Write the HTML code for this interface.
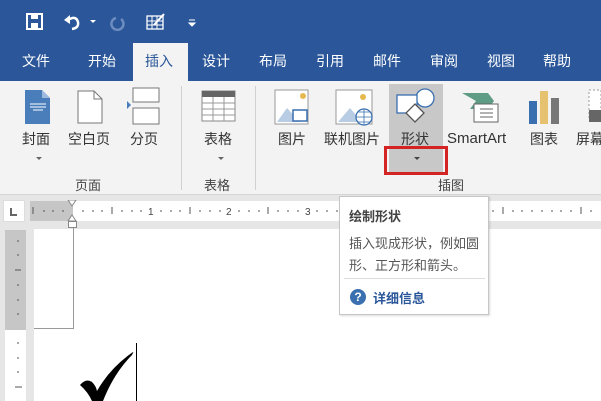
<!DOCTYPE html>
<html><head><meta charset="utf-8"><style>
*{margin:0;padding:0;box-sizing:border-box}
body{width:601px;height:401px;overflow:hidden;position:relative;background:#e6e6e6;font-family:"Liberation Sans","Noto Sans CJK SC",sans-serif;color:#333}
.a{position:absolute}
.tab{position:absolute;top:51px;color:#fff;font-size:14px}
.lbl{position:absolute;top:129px;font-size:14px;color:#333;white-space:nowrap}
.glb{position:absolute;top:175px;font-size:13px;color:#444}
.caret{position:absolute;width:0;height:0;border-left:3px solid transparent;border-right:3px solid transparent;border-top:3px solid #666}
</style></head><body>
<div class="a" style="left:0;top:0;width:601px;height:81px;background:#2b579a"></div>
<svg class="a" style="left:24px;top:11px" width="180" height="22" viewBox="0 0 180 22">
<rect x="3" y="3" width="15" height="15" fill="none" stroke="#fff" stroke-width="2"/><rect x="7" y="3" width="7" height="5" fill="#fff"/><rect x="7" y="12" width="7" height="6" fill="#fff"/>
<path d="M44 9 Q52 4 54 11 Q55 17 48 18" fill="none" stroke="#fff" stroke-width="2.5"/><path d="M40 9 L46 4 L46 13Z" fill="#fff"/>
<path d="M66 9 L72 9 L69 12Z" fill="#fff"/>
<path d="M92 7 A6 6 0 1 0 97 8" fill="none" stroke="#6d8cbf" stroke-width="2.5"/>
<rect x="123" y="5" width="16" height="13" fill="none" stroke="#fff" stroke-width="1.3"/><path d="M123 10H139M123 14H139M128 5V18M133 5V18" stroke="#fff"/><path d="M130 14L140 3" stroke="#fff" stroke-width="2"/>
<path d="M165 9H171M165 12L171 12L168 15Z" fill="#fff" stroke="#fff"/>
</svg>
<div class="a" style="left:133px;top:43px;width:55px;height:38px;background:#f3f3f3"></div>
<div class="tab" style="left:22px">文件</div>
<div class="tab" style="left:88px">开始</div>
<div class="tab" style="left:145px;color:#2b579a">插入</div>
<div class="tab" style="left:202px">设计</div>
<div class="tab" style="left:259px">布局</div>
<div class="tab" style="left:316px">引用</div>
<div class="tab" style="left:373px">邮件</div>
<div class="tab" style="left:430px">审阅</div>
<div class="tab" style="left:487px">视图</div>
<div class="tab" style="left:543px">帮助</div>
<div class="a" style="left:0;top:81px;width:601px;height:114px;background:#f3f3f3;border-bottom:1px solid #d5d5d5"></div>
<div class="a" style="left:389px;top:84px;width:54px;height:90px;background:#c8c8c8"></div>
<div class="a" style="left:384px;top:146px;width:64px;height:29px;border:3px solid #d42323"></div>
<div class="a" style="left:181px;top:86px;width:1px;height:104px;background:#d0d0d0"></div>
<div class="a" style="left:255px;top:86px;width:1px;height:104px;background:#d0d0d0"></div>
<svg class="a" style="left:0;top:84px" width="601" height="42" viewBox="0 84 601 42">
<path d="M25 90H42L50 98V124H25Z" fill="#4a7ebb"/><path d="M42 90V98H50" fill="#9dbbe0"/><path d="M30 104H46M30 107H46M33 110H43" stroke="#fff"/>
<path d="M78 91H94L102 99V123H78Z" fill="#fff" stroke="#777"/><path d="M94 91V99H102" fill="none" stroke="#777"/>
<rect x="133" y="88" width="26" height="14" fill="#fff" stroke="#777"/><rect x="133" y="108" width="26" height="16" fill="#fff" stroke="#777"/><path d="M127 101L131 105L127 109Z" fill="#4a7ebb"/>
<rect x="202" y="91" width="33" height="30" fill="#fff" stroke="#888"/><rect x="202" y="91" width="33" height="6" fill="#666"/><path d="M202 103H235M202 109H235M202 115H235M213 97V121M224 97V121" stroke="#999"/>
<rect x="275" y="90" width="33" height="34" fill="#fff" stroke="#999"/><path d="M277 122L287 108L300 122Z" fill="#b8cde4"/><circle cx="303" cy="96" r="3" fill="#e6b94f"/><rect x="293" y="110" width="14" height="11" fill="#fff" stroke="#3a6fb0" stroke-width="1.5"/>
<rect x="336" y="90" width="36" height="34" fill="#fff" stroke="#999"/><path d="M338 122L350 108L362 122Z" fill="#b8cde4"/><circle cx="363" cy="97" r="3" fill="#e6b94f"/><circle cx="364" cy="117" r="8" fill="#fff" stroke="#3a6fb0" stroke-width="1.3"/><path d="M356 117H372M364 109V125M358 112H370M358 122H370" stroke="#3a6fb0" stroke-width="0.8"/>
<circle cx="425" cy="98" r="9" fill="#fff" stroke="#3a6fb0" stroke-width="1.3"/><rect x="397" y="95" width="20" height="18" fill="#fff" stroke="#3a6fb0" stroke-width="1.3"/><path d="M415 104L424 113L415 122L406 113Z" fill="#fff" stroke="#555" stroke-width="1.3"/>
<path d="M462 93H488L494 101L488 109H470L476 101Z" fill="#5f9c85"/><rect x="474" y="104" width="24" height="18" fill="#fff" stroke="#666"/><path d="M480 109H493M480 113H493M480 117H493" stroke="#666"/>
<rect x="529" y="101" width="8" height="23" fill="#3a6fb0"/><rect x="540" y="91" width="8" height="33" fill="#e6c170"/><rect x="551" y="98" width="8" height="26" fill="#777"/>
<rect x="589" y="90" width="12" height="30" fill="#fff" stroke="#999" stroke-dasharray="2 2"/><rect x="589" y="110" width="12" height="12" fill="#666"/>
</svg>
<div class="lbl" style="left:22px">封面</div>
<div class="lbl" style="left:68px">空白页</div>
<div class="lbl" style="left:130px">分页</div>
<div class="lbl" style="left:204px">表格</div>
<div class="lbl" style="left:278px">图片</div>
<div class="lbl" style="left:324px">联机图片</div>
<div class="lbl" style="left:401px">形状</div>
<div class="lbl" style="left:447px;top:130px;font-size:15px">SmartArt</div>
<div class="lbl" style="left:530px">图表</div>
<div class="lbl" style="left:576px">屏幕</div>
<div class="caret" style="left:36px;top:157px"></div>
<div class="caret" style="left:218px;top:157px"></div>
<div class="caret" style="left:414px;top:157px;border-top-color:#444"></div>
<div class="glb" style="left:75px">页面</div>
<div class="glb" style="left:204px">表格</div>
<div class="glb" style="left:438px">插图</div>
<div class="a" style="left:3px;top:200px;width:22px;height:22px;background:#fff;border:1px solid #ddd"></div>
<div class="a" style="left:10px;top:208px;width:7px;height:8px;border-left:2px solid #666;border-bottom:2px solid #666"></div>
<div class="a" style="left:30px;top:201px;width:571px;height:20px;background:#fff"></div>
<div class="a" style="left:30px;top:201px;width:43px;height:20px;background:#c6c6c6"></div>
<svg class="a" style="left:30px;top:200px" width="571" height="21" viewBox="0 0 571 21">
<g stroke="#555">
<path d="M3 7V14M82 7V14M160 7V14M238 7V14M317 7V14M473 7V14M551 7V14"/>
<path d="M14 10V12M23 10V12M33 10V12M53 10V12M63 10V12M72 10V12M92 10V12M102 10V12M111 10V12M131 10V12M141 10V12M150 10V12M170 10V12M180 10V12M190 10V12M209 10V12M219 10V12M229 10V12M248 10V12M258 10V12M268 10V12M287 10V12M297 10V12M307 10V12M326 10V12M463 10V12M483 10V12M492 10V12M502 10V12M512 10V12M522 10V12M531 10V12M541 10V12M561 10V12"/>
</g>
<text x="118" y="15" font-size="10" fill="#444" font-family="Liberation Sans">1</text>
<text x="196" y="15" font-size="10" fill="#444" font-family="Liberation Sans">2</text>
<text x="275" y="15" font-size="10" fill="#444" font-family="Liberation Sans">3</text>
<path d="M38 0H46L42 6Z" fill="#fff" stroke="#888"/><path d="M42 15L38 21H46Z" fill="#fff" stroke="#888"/>
</svg>
<div class="a" style="left:68px;top:221px;width:9px;height:7px;background:#fff;border:1px solid #888"></div>
<div class="a" style="left:5px;top:230px;width:21px;height:171px;background:#fff"></div>
<div class="a" style="left:5px;top:230px;width:21px;height:100px;background:#c6c6c6"></div>
<svg class="a" style="left:5px;top:225px" width="21" height="176"><g stroke="#555"><path d="M12 16H14M12 30H14M10 45H16M12 60H14M12 75H14M12 89H14M12 118H14M12 133H14M12 147H14M10 162H17"/></g></svg>
<div class="a" style="left:34px;top:229px;width:567px;height:172px;background:#fff"></div>
<div class="a" style="left:34px;top:228px;width:40px;height:101px;border-right:1px solid #999;border-bottom:1px solid #999"></div>
<svg class="a" style="left:76px;top:348px" width="62" height="53" viewBox="0 0 62 53">
<path d="M4 37 Q10 30 16 34 Q20 38 21 43 Q34 20 57 4 Q58 3 56 7 Q38 25 27 53 L16 53 Q12 44 4 37Z" fill="#000"/>
</svg>
<div class="a" style="left:136px;top:343px;width:1px;height:58px;background:#000"></div>
<div class="a" style="left:339px;top:196px;width:150px;height:119px;background:#fff;border:1px solid #c6c6c6;box-shadow:1px 1px 2px rgba(0,0,0,.15)">
<div class="a" style="left:9px;top:9px;font-size:13px;font-weight:bold;color:#444">绘制形状</div>
<div class="a" style="left:9px;top:36px;font-size:13px;line-height:22px;color:#555;width:135px">插入现成形状，例如圆形、正方形和箭头。</div>
<div class="a" style="left:4px;top:81px;width:141px;height:1px;background:#ddd"></div>
<div class="a" style="left:10px;top:92px;width:16px;height:16px;border-radius:50%;background:#3a6fb0;color:#fff;font-size:12px;font-weight:bold;text-align:center;line-height:16px">?</div>
<div class="a" style="left:33px;top:91px;font-size:13px;font-weight:bold;color:#2b579a">详细信息</div>
</div>
</body></html>
